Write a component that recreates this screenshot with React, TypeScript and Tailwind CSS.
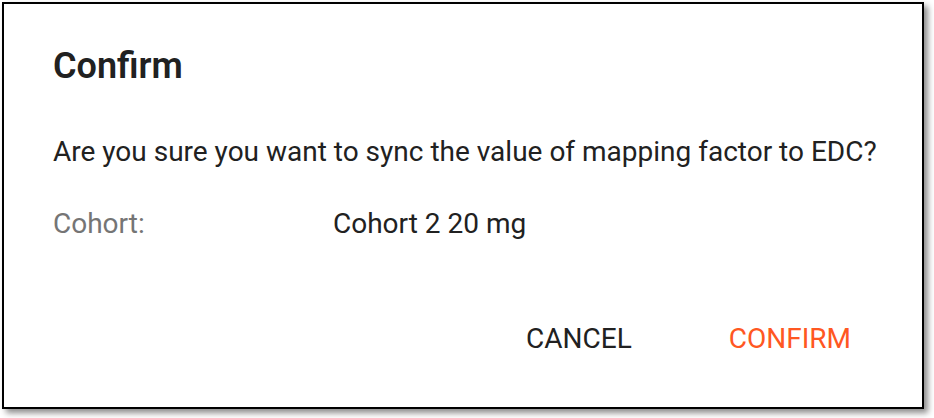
export default function App() {
  return (
    <div className="w-[934px] h-[418px] bg-white" style={{ fontFamily: 'Roboto, "Liberation Sans", sans-serif' }}>
      <div className="ml-[2px] mt-[2px] w-[922px] h-[407px] border-2 border-black bg-white shadow-[4px_4px_6px_rgba(0,0,0,0.45)] flex flex-col">
        <div className="pl-[49px] pt-[42px] text-[36px] leading-[40px] font-semibold text-[#212121]">Confirm</div>
        <div className="pl-[49px] mt-[48px] text-[28px] leading-[36px] text-[#212121] whitespace-nowrap">
          Are you sure you want to sync the value of mapping factor to EDC?
        </div>
        <div className="pl-[49px] mt-[36px] flex text-[28px] leading-[36px]">
          <div className="w-[280px] text-[#757575]">Cohort:</div>
          <div className="text-[#212121]">Cohort 2 20 mg</div>
        </div>
        <div className="mt-auto mb-[50px] flex justify-end items-center pr-[71px] gap-[97px] text-[28px] leading-[36px]">
          <button className="text-[#212121] uppercase">Cancel</button>
          <button className="text-[#FF5722] uppercase">Confirm</button>
        </div>
      </div>
    </div>
  );
}
